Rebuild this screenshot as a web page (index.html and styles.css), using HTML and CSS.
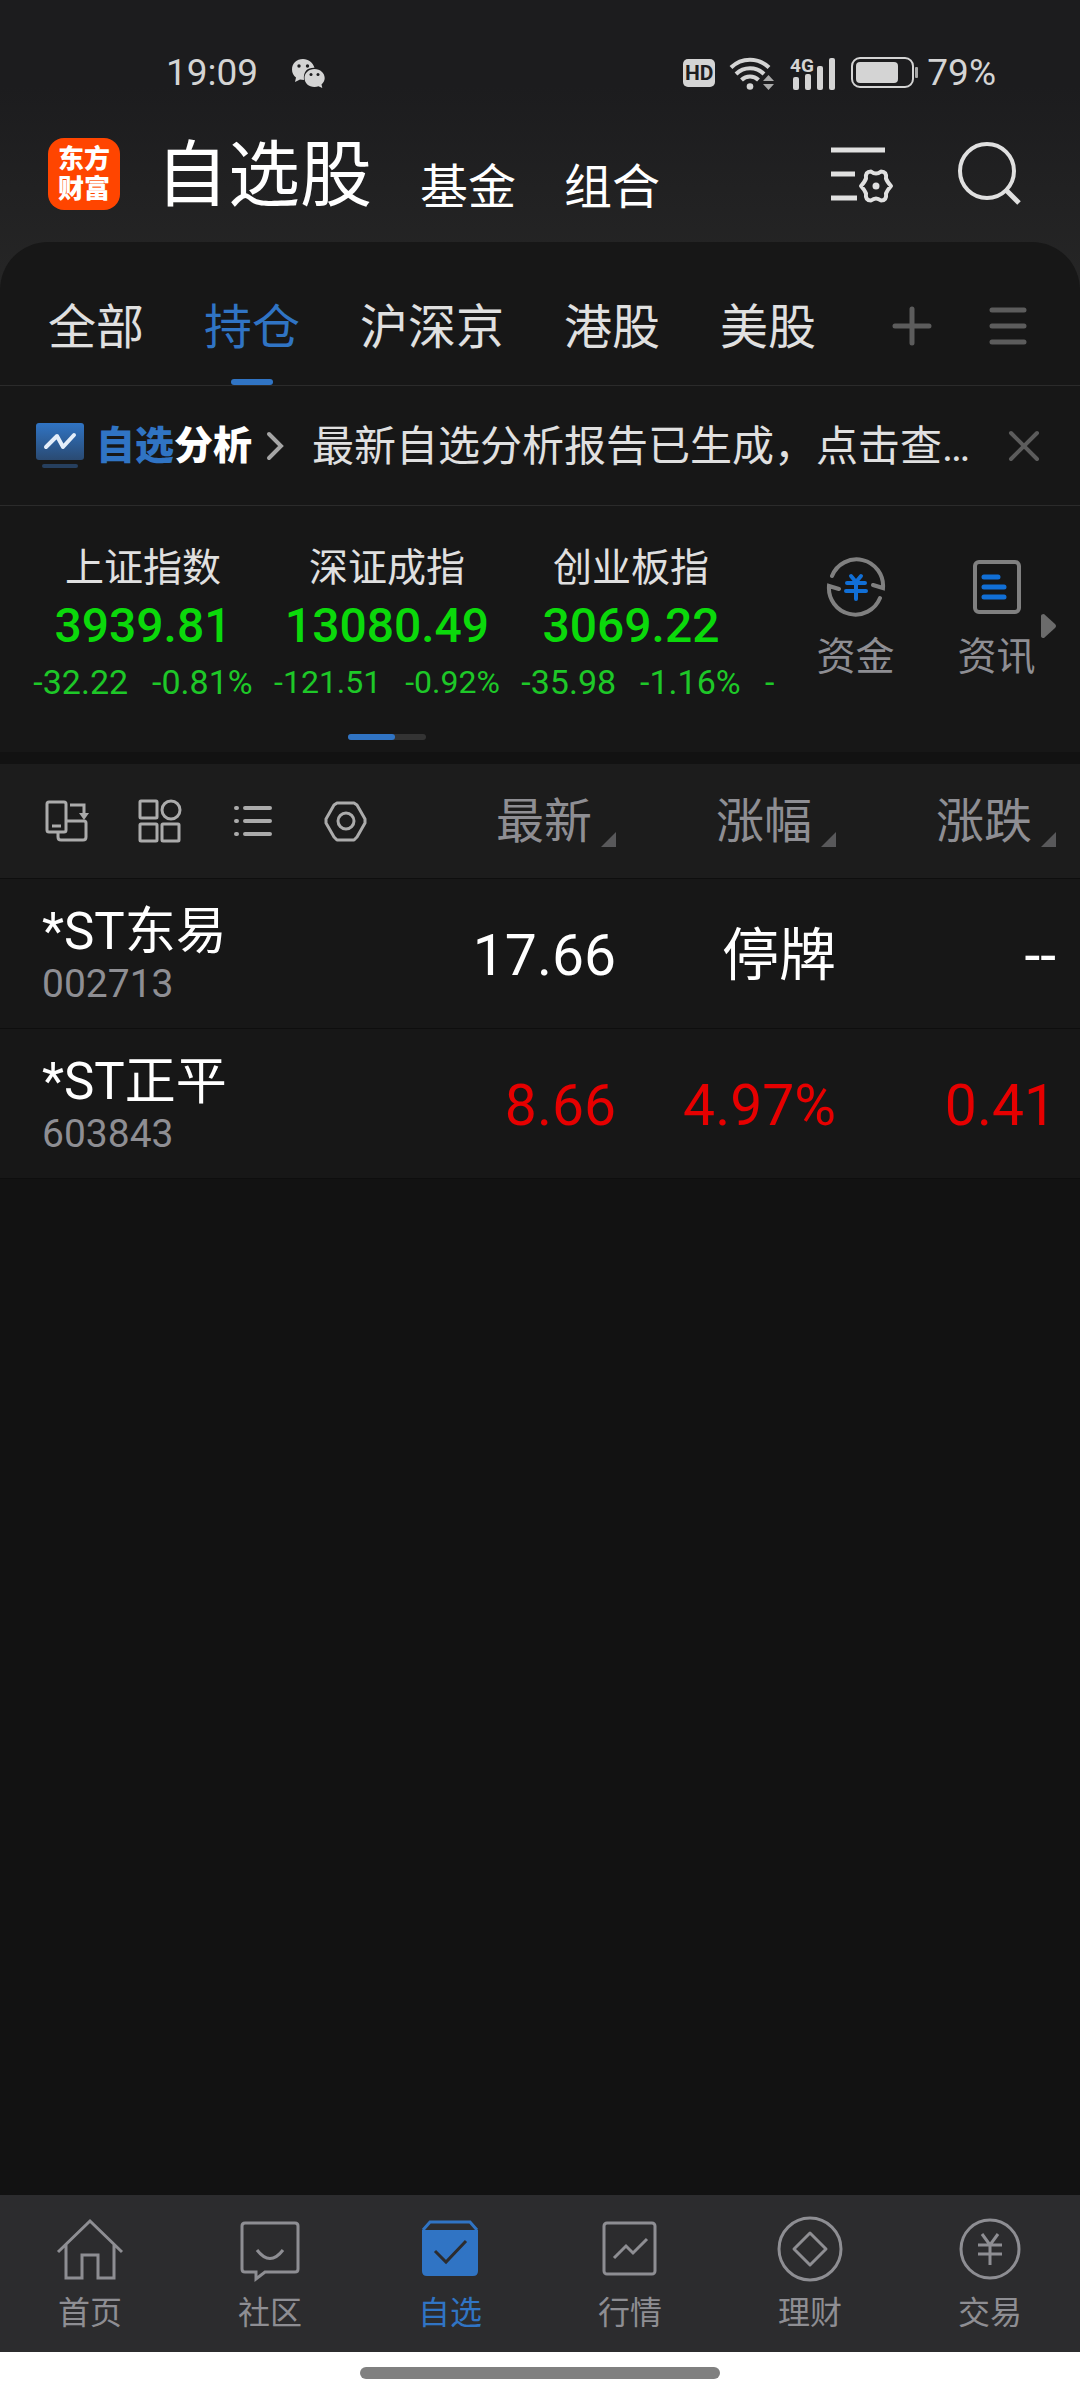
FILE: index.html
```html
<!DOCTYPE html>
<html lang="zh-CN">
<head>
    <meta charset="UTF-8">
    <meta name="viewport" content="width=device-width, initial-scale=1.0">
    <title>自选股</title>
    <link rel="stylesheet" href="styles.css">
</head>
<body>
    <header class="top">
        <div class="status">
            <span class="time">19:09</span>
            <svg class="wechat" width="34" height="30" viewBox="0 0 34 30">
                <path fill="#d4d4d4" d="M12 1C5.500 1 1 5.500 1 11.500c0 3.500 1.500 6 4 8L4 24l5-2.500c1.300.3 2.500.4 4 .4C12 13 17 9.500 23.500 9.800 22 4.500 17.500 1 12 1z"/>
                <path fill="#d4d4d4" d="M23.500 11c-5.800 0-10 4-10 9s4.200 9 10 9c1.500 0 2.800-.2 4-.7l3.800 1.700-.8-3.600c2-1.600 3.200-3.800 3.200-6.400 0-5-4.400-9-10.200-9z"/>
                <g fill="#1d1d1f"><circle cx="8" cy="8" r="1.700"/><circle cx="16.500" cy="8" r="1.700"/><circle cx="20" cy="16.500" r="1.500"/><circle cx="27" cy="16.500" r="1.500"/></g>
            </svg>
            <div class="status-right">
                <span class="hd">HD</span>
                <svg width="46" height="36" viewBox="0 0 46 36">
                    <g fill="none" stroke="#d4d4d4" stroke-width="4">
                        <path d="M2 12.500a27 27 0 0 1 38 0"/>
                        <path d="M7 19a20 20 0 0 1 28 0"/>
                        <path d="M12.500 25a12 12 0 0 1 17 0"/>
                    </g>
                    <circle cx="21" cy="31.500" r="3.300" fill="#d4d4d4"/>
                    <path d="M34 26l5.500-6 5.500 6zM34 29h11l-5.500 6z" fill="#a9a9a9"/>
                </svg>
                <svg class="signal" width="48" height="36" viewBox="0 0 48 36">
                    <text x="1" y="17" font-size="19" font-weight="700" fill="#d4d4d4">4G</text>
                    <g fill="#d4d4d4"><rect x="4" y="22" width="6" height="13" rx="2"/><rect x="16" y="19" width="6" height="16" rx="2"/><rect x="28" y="11" width="6" height="24" rx="2"/><rect x="40" y="3" width="6" height="32" rx="2"/></g>
                </svg>
                <svg width="68" height="32" viewBox="0 0 68 32">
                    <rect x="1" y="1" width="61" height="29" rx="8" fill="none" stroke="#d4d4d4" stroke-width="2"/>
                    <rect x="5" y="5" width="42" height="21" rx="4" fill="#d4d4d4"/>
                    <rect x="64" y="10" width="3" height="11" rx="1" fill="#a9a9a9"/>
                </svg>
                <span class="time">79%</span>
            </div>
        </div>
        <div class="title-bar">
            <a class="logo" href="#">东方<br>财富</a>
            <h1>自选股</h1>
            <a class="title-link" href="#">基金</a>
            <a class="title-link" href="#">组合</a>
            <div class="title-actions">
                <button type="button" aria-label="管理">
                    <svg width="66" height="66" viewBox="0 0 66 66" fill="none" stroke="#e0e0e0" stroke-width="5">
                        <path d="M3 9h54M3 33h24M3 57h26"/>
                        <path stroke-width="4" stroke-linejoin="round" d="M43 30.500q5 4 10 0q6 0 5 7q1 3 5 7.500q-4 4.500-5 7.500q1 7-5 7q-5-4-10 0q-6 0-5-7q-1-3-5-7.500q4-4.500 5-7.500q-1-7 5-7z"/>
                        <circle cx="48" cy="45" r="3.500" fill="#e0e0e0" stroke="none"/>
                    </svg>
                </button>
                <button type="button" aria-label="搜索">
                    <svg width="66" height="66" viewBox="0 0 66 66" fill="none" stroke="#e0e0e0" stroke-width="4">
                        <circle cx="30" cy="30" r="27"/>
                        <path stroke-width="5" d="M49 49l13 13"/>
                    </svg>
                </button>
            </div>
        </div>
    </header>

    <main>
        <nav class="tabs">
            <a href="#">全部</a>
            <a href="#" class="active">持仓</a>
            <a href="#">沪深京</a>
            <a href="#">港股</a>
            <a href="#">美股</a>
            <div class="tab-actions">
                <button type="button" aria-label="添加分组">
                    <svg width="42" height="42" viewBox="0 0 42 42" stroke="#5c5c5c" stroke-width="5" stroke-linecap="round"><path d="M21 4v34M4 21h34"/></svg>
                </button>
                <button type="button" aria-label="分组列表">
                    <svg width="42" height="42" viewBox="0 0 42 42" stroke="#5c5c5c" stroke-width="5" stroke-linecap="round"><path d="M5 5h32M5 21h32M5 37h32"/></svg>
                </button>
            </div>
        </nav>

        <section class="notice">
            <svg width="48" height="46" viewBox="0 0 48 46">
                <defs><linearGradient id="blue" x1="0" y1="0" x2="0" y2="1"><stop offset="0" stop-color="#3074c4"/><stop offset="1" stop-color="#2a4a72"/></linearGradient></defs>
                <rect width="48" height="37" rx="3" fill="url(#blue)"/>
                <path d="M10 24l11-11 6 11 11-12" fill="none" stroke="#e4eefa" stroke-width="4" stroke-linecap="round" stroke-linejoin="round"/>
                <rect x="6" y="41" width="36" height="4" rx="2" fill="#263f5e"/>
            </svg>
            <strong><em>自选</em>分析</strong>
            <svg width="18" height="30" viewBox="0 0 18 30" fill="none" stroke="#a5a5a5" stroke-width="4" stroke-linecap="round"><path d="M3 3l12 12L3 27"/></svg>
            <a class="notice-text" href="#">最新自选分析报告已生成，点击查…</a>
            <button type="button" aria-label="关闭">
                <svg width="32" height="32" viewBox="0 0 32 32" stroke="#5c5c5c" stroke-width="4" stroke-linecap="round"><path d="M3 3l26 26M29 3L3 29"/></svg>
            </button>
        </section>

        <section class="market">
            <div class="indices">
                <div class="index-list">
                    <div class="index">
                        <div class="index-name">上证指数</div>
                        <div class="index-value">3939.81</div>
                        <div class="index-change"><span>-32.22</span><span>-0.81%</span></div>
                    </div>
                    <div class="index">
                        <div class="index-name">深证成指</div>
                        <div class="index-value">13080.49</div>
                        <div class="index-change small"><span>-121.51</span><span>-0.92%</span></div>
                    </div>
                    <div class="index">
                        <div class="index-name">创业板指</div>
                        <div class="index-value">3069.22</div>
                        <div class="index-change"><span>-35.98</span><span>-1.16%</span></div>
                    </div>
                    <div class="index next">
                        <div class="index-change">-</div>
                    </div>
                </div>
                <div class="pager"><span></span></div>
            </div>
            <div class="shortcuts">
                <a href="#">
                    <svg width="60" height="60" viewBox="0 0 60 60" fill="none" stroke="#808080" stroke-width="4">
                        <path stroke-linecap="round" d="M6 19a26.500 26.500 0 0 1 51 12l-10-3"/>
                        <path stroke-linecap="round" d="M54 41a26.500 26.500 0 0 1-51-12l10 3"/>
                        <path stroke="#116fd6" stroke-linecap="round" d="M25 19l5 6 5-6M21 26h18M20 34h20M30 26v16"/>
                    </svg>
                    资金
                </a>
                <a href="#">
                    <svg width="60" height="60" viewBox="0 0 60 60" fill="none" stroke="#808080" stroke-width="4">
                        <rect x="8" y="5" width="44" height="50" rx="4"/>
                        <path stroke="#116fd6" stroke-width="5" stroke-linecap="round" d="M17 20h14M17 30h20M17 40h20"/>
                    </svg>
                    资讯
                </a>
                <svg class="more" width="15" height="24" viewBox="0 0 15 24"><path fill="#6b6b6b" d="M0 2q0-2 3-2l11 10q2 2 0 4L3 24q-3 0-3-2z"/></svg>
            </div>
        </section>

        <table class="stocks">
            <thead>
                <tr>
                    <th>
                        <div class="tools">
                            <button type="button" aria-label="横屏">
                                <svg width="48" height="48" viewBox="0 0 48 48" fill="none" stroke="#ababab" stroke-width="3">
                                    <rect x="4" y="5" width="19" height="30" rx="2"/><path d="M9 29h9"/>
                                    <path d="M23 24h18q2 0 2 2v14q0 3-3 3H18q-3 0-3-3v-5M27 8h14v9"/><path fill="#ababab" stroke="none" d="M36 16h10l-5 7z"/>
                                </svg>
                            </button>
                            <button type="button" aria-label="宫格">
                                <svg width="48" height="48" viewBox="0 0 48 48" fill="none" stroke="#ababab" stroke-width="3">
                                    <rect x="4" y="4" width="17" height="17" rx="1"/><circle cx="35" cy="13" r="9"/><rect x="4" y="27" width="17" height="17" rx="1"/><rect x="26" y="27" width="17" height="17" rx="1"/>
                                </svg>
                            </button>
                            <button type="button" aria-label="列表">
                                <svg width="48" height="48" viewBox="0 0 48 48" fill="none" stroke="#ababab" stroke-width="4" stroke-linecap="round">
                                    <path d="M7 11h1M16 11h25M7 24h1M16 24h25M7 37h1M16 37h25"/>
                                </svg>
                            </button>
                            <button type="button" aria-label="设置">
                                <svg width="48" height="48" viewBox="0 0 48 48" fill="none" stroke="#ababab" stroke-width="3" stroke-linejoin="round">
                                    <path d="M15 6h17l3 2 8 14v4l-8 14-3 3H15l-3-3-8-14v-4l8-14z"/><circle cx="24" cy="24" r="8"/>
                                </svg>
                            </button>
                        </div>
                    </th>
                    <th><button type="button" class="sort">最新</button></th>
                    <th><button type="button" class="sort">涨幅</button></th>
                    <th><button type="button" class="sort">涨跌</button></th>
                </tr>
            </thead>
            <tbody>
                <tr>
                    <td><div class="name">*ST东易</div><div class="code">002713</div></td>
                    <td>17.66</td>
                    <td>停牌</td>
                    <td>--</td>
                </tr>
                <tr class="up">
                    <td><div class="name">*ST正平</div><div class="code">603843</div></td>
                    <td>8.66</td>
                    <td>4.97%</td>
                    <td>0.41</td>
                </tr>
            </tbody>
        </table>
    </main>

    <nav class="bottom-nav">
        <a href="#">
            <svg width="68" height="68" viewBox="0 0 68 68"><path d="M2 37L34 6l32 31M10 30v33h16V40h16v23h16V30"/></svg>
            首页
        </a>
        <a href="#">
            <svg width="68" height="68" viewBox="0 0 68 68"><path d="M9 8h50q3 0 3 3v43q0 3-3 3H29l-9 7v-7H9q-3 0-3-3V11q0-3 3-3z"/><path d="M21 35q13 17 26 0"/></svg>
            社区
        </a>
        <a href="#" class="active">
            <svg width="68" height="68" viewBox="0 0 68 68"><path d="M7 15l7-8h40l7 8"/><path class="fill" d="M6 15h56v41q0 5-5 5H11q-5 0-5-5z"/><path class="check" d="M19 36l11 11 20-21"/></svg>
            自选
        </a>
        <a href="#">
            <svg width="68" height="68" viewBox="0 0 68 68"><rect x="8" y="8" width="51" height="51" rx="3"/><path d="M18 43l12-12 7 7 14-14"/></svg>
            行情
        </a>
        <a href="#">
            <svg width="68" height="68" viewBox="0 0 68 68"><circle cx="34" cy="34" r="31"/><path stroke-linejoin="round" d="M34 18l16 16-16 16-16-16z"/></svg>
            理财
        </a>
        <a href="#">
            <svg width="68" height="68" viewBox="0 0 68 68"><circle cx="34" cy="34" r="29"/><path d="M26 19l8 11 8-11M22 30h24M22 39h24M34 30v20"/></svg>
            交易
        </a>
    </nav>
    <div class="home-bar"><span></span></div>
</body>
</html>
```

FILE: styles.css
```css
* {
    box-sizing: border-box;
}
body {
    margin: 0;
    min-height: 100vh;
    display: flex;
    flex-direction: column;
    background-color: #121212;
    color: #e0e0e0;
    font-family: Roboto, "Noto Sans CJK SC", sans-serif;
}
a {
    color: inherit;
    text-decoration: none;
}
button {
    padding: 0;
    border: none;
    background: none;
    color: inherit;
    font: inherit;
    cursor: pointer;
}
svg {
    display: block;
    flex-shrink: 0;
}

/* Cabecera */
.top {
    background: linear-gradient(#1c1c1e 30%, #262626);
    padding-bottom: 32px;
    margin-bottom: -48px;
    height: 290px;
}
.status {
    display: flex;
    align-items: center;
    height: 110px;
    padding: 36px 84px 0 166px;
    color: #d4d4d4;
}
.time {
    font-size: 37px;
    line-height: 40px;
}
.wechat {
    margin-left: 33px;
}
.signal {
    overflow: visible;
}
.status-right {
    display: flex;
    align-items: center;
    gap: 14px;
    margin-left: auto;
}
.status-right .time {
    margin-left: -6px;
}
.hd {
    width: 32px;
    background-color: #d4d4d4;
    color: #1d1d1f;
    border-radius: 5px;
    font-size: 21px;
    line-height: 28px;
    font-weight: 700;
    text-align: center;
}
.title-bar {
    display: flex;
    align-items: center;
    height: 128px;
    padding: 0 57px 0 48px;
    color: #fff;
}
.logo {
    width: 72px;
    height: 72px;
    padding: 6px 0;
    margin-right: 36px;
    background-color: #ff4500;
    border-radius: 16px;
    font-size: 26px;
    line-height: 30px;
    font-weight: 900;
    text-align: center;
}
h1 {
    margin: 0;
    padding-top: 4px;
    font-size: 72px;
    line-height: 80px;
    font-weight: 400;
}
.title-link {
    margin-left: 48px;
    padding-top: 28px;
    font-size: 48px;
    line-height: 56px;
}
.title-actions {
    display: flex;
    gap: 63px;
    margin-left: auto;
}

/* Pestañas */
main {
    flex: 1;
}
.tabs {
    display: flex;
    align-items: center;
    gap: 60px;
    height: 144px;
    padding: 24px 51px 0 48px;
    background-color: #171717;
    border-bottom: 1px solid #2b2b2b;
    border-radius: 48px 48px 0 0;
    font-size: 48px;
}
.tabs a {
    padding-top: 5px;
    line-height: 114px;
}
.tabs .active {
    position: relative;
    color: #3074c4;
}
.tabs .active::after {
    content: "";
    position: absolute;
    left: 50%;
    bottom: 0;
    width: 42px;
    height: 6px;
    margin-left: -21px;
    border-radius: 3px;
    background-color: #3074c4;
}
.tab-actions {
    display: flex;
    gap: 54px;
    margin-left: auto;
}

/* Aviso */
.notice {
    display: flex;
    align-items: center;
    height: 120px;
    padding: 0 40px 0 36px;
    background-color: #171717;
    border-bottom: 1px solid #2b2b2b;
    font-size: 42px;
    line-height: 56px;
}
.notice strong {
    margin: 0 14px 0 12px;
    color: #fff;
    font-size: 39px;
    font-weight: 900;
}
.notice em {
    color: #3074c4;
    font-style: normal;
}
.notice-text {
    flex: 1;
    margin-left: 28px;
    padding-top: 2px;
    white-space: nowrap;
}

/* Indices */
.market {
    display: flex;
    height: 246px;
    padding-top: 34px;
    background-color: #171717;
}
.indices {
    flex: 1;
    min-width: 0;
    overflow: hidden;
}
.index-list {
    display: flex;
    height: 168px;
    padding-left: 21px;
}
.index {
    flex: 0 0 244px;
    line-height: 56px;
    text-align: center;
}
.index.next {
    padding: 114px 0 0 12px;
    text-align: left;
}
.index-name {
    font-size: 39px;
}
.index-value {
    padding-top: 2px;
    color: #0bd90b;
    font-size: 48px;
    font-weight: 500;
}
.index-change {
    color: #1ec828;
    font-size: 34px;
}
.index-change.small {
    font-size: 32px;
}
.index-change span + span {
    margin-left: 24px;
}
.pager {
    width: 78px;
    height: 6px;
    margin: 26px auto 0;
    border-radius: 3px;
    background-color: #333;
}
.pager span {
    display: block;
    width: 47px;
    height: 6px;
    border-radius: 3px;
    background-color: #3074c4;
}
.shortcuts {
    position: relative;
    display: flex;
    padding: 17px 13px 0 11px;
}
.shortcuts a {
    display: flex;
    flex-direction: column;
    align-items: center;
    gap: 12px;
    width: 141px;
    color: #8e8e93;
    font-size: 39px;
    line-height: 56px;
}
.shortcuts .more {
    position: absolute;
    right: 24px;
    top: 74px;
}

/* Tabla de valores */
.stocks {
    width: 100%;
    margin-top: 12px;
    border-collapse: collapse;
    table-layout: fixed;
    background-color: #171717;
}
.stocks tr {
    height: 150px;
    border-bottom: 1px solid #0e0e0e;
}
.stocks thead tr {
    height: 114px;
    background-color: #1c1c1c;
}
.stocks th,
.stocks td {
    width: 220px;
    padding: 0;
    font-size: 57px;
    line-height: 64px;
    font-weight: 400;
    text-align: right;
    color: #fff;
}
.stocks td {
    padding-top: 6px;
}
.stocks th:first-child,
.stocks td:first-child {
    width: auto;
    text-align: left;
}
.stocks td:first-child {
    padding-left: 42px;
}
.stocks th:last-child,
.stocks td:last-child {
    width: 244px;
    padding-right: 24px;
}
.stocks .up td {
    color: #e60000;
}
.stocks .name {
    color: #fff;
    font-size: 51px;
    line-height: 56px;
}
.stocks .code {
    color: #8e8e93;
    font-size: 39px;
    line-height: 48px;
}
.tools {
    display: flex;
    gap: 45px;
    padding-left: 43px;
}
.sort {
    display: inline-flex;
    align-items: center;
    color: #8e8e93;
    font-size: 48px;
}
.sort::after {
    content: "";
    margin: 34px 0 0 9px;
    border-left: 15px solid transparent;
    border-bottom: 15px solid #58585a;
}

/* Barra inferior */
.bottom-nav {
    display: flex;
    height: 157px;
    padding-top: 20px;
    background-color: #2c2c2e;
}
.bottom-nav a {
    flex: 1;
    display: flex;
    flex-direction: column;
    align-items: center;
    gap: 8px;
    color: #8e8e93;
    font-size: 32px;
    line-height: 44px;
}
.bottom-nav svg {
    fill: none;
    stroke: currentColor;
    stroke-width: 3;
}
.bottom-nav .active {
    color: #3074c4;
}
.bottom-nav .fill {
    fill: currentColor;
    stroke: none;
}
.bottom-nav .check {
    stroke: #2c2c2e;
}
.home-bar {
    height: 48px;
    padding-top: 15px;
    background-color: #fff;
}
.home-bar span {
    display: block;
    width: 360px;
    height: 12px;
    margin: 0 auto;
    border-radius: 6px;
    background-color: #808080;
}
```
